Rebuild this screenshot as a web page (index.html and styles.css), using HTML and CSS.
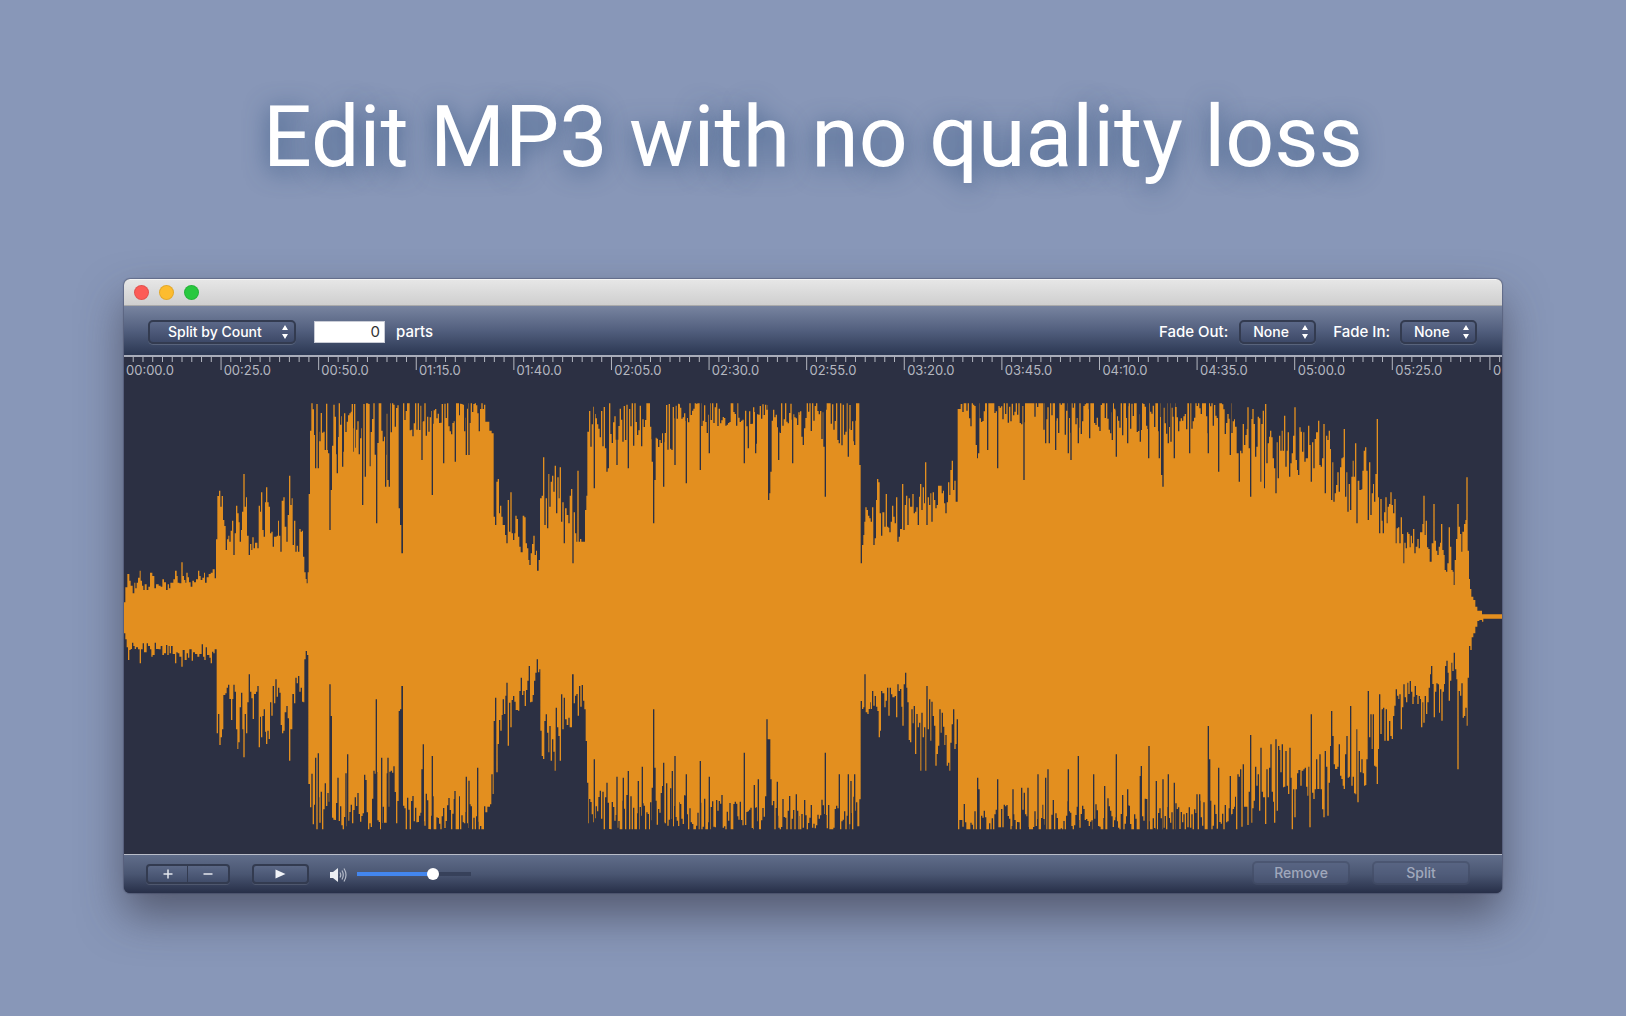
FILE: index.html
```html
<!DOCTYPE html>
<html lang="en">
<head>
  <meta charset="UTF-8">
  <meta name="viewport" content="width=device-width, initial-scale=1.0">
  <title>Edit MP3 with no quality loss</title>
  <link rel="stylesheet" href="styles.css">
</head>
<body>
  <h1>Edit MP3 with no quality loss</h1>

  <main class="window">
    <div class="titlebar">
      <button class="light close" type="button" aria-label="Close"></button>
      <button class="light minimize" type="button" aria-label="Minimize"></button>
      <button class="light zoom" type="button" aria-label="Zoom"></button>
    </div>

    <div class="toolbar">
      <div class="popup wide">
        <select id="splitMode" aria-label="Split mode">
          <option>Split by Count</option>
        </select>
        <svg class="arrows" viewBox="0 0 8 16"><path d="M4 1L7 6H1zM4 15L1 10H7z"/></svg>
      </div>
      <input type="text" id="parts" value="0">
      <label for="parts">parts</label>

      <label class="fade-out" for="fadeOut">Fade Out:</label>
      <div class="popup">
        <select id="fadeOut">
          <option>None</option>
        </select>
        <svg class="arrows" viewBox="0 0 8 16"><path d="M4 1L7 6H1zM4 15L1 10H7z"/></svg>
      </div>
      <label class="fade-in" for="fadeIn">Fade In:</label>
      <div class="popup">
        <select id="fadeIn">
          <option>None</option>
        </select>
        <svg class="arrows" viewBox="0 0 8 16"><path d="M4 1L7 6H1zM4 15L1 10H7z"/></svg>
      </div>
    </div>

    <div class="ruler">
      <svg id="ticks" class="ticks"></svg>
      <div class="times">
        <span>00:00.0</span>
        <span>00:25.0</span>
        <span>00:50.0</span>
        <span>01:15.0</span>
        <span>01:40.0</span>
        <span>02:05.0</span>
        <span>02:30.0</span>
        <span>02:55.0</span>
        <span>03:20.0</span>
        <span>03:45.0</span>
        <span>04:10.0</span>
        <span>04:35.0</span>
        <span>05:00.0</span>
        <span>05:25.0</span>
        <span>05:50.0</span>
      </div>
    </div>

    <div class="wave">
      <svg viewBox="0 0 4134 1419" preserveAspectRatio="none">
        <path id="wavePath" transform="translate(0 30)"/>
      </svg>
    </div>

    <div class="controls">
      <div class="segmented">
        <button type="button" aria-label="Zoom in">
          <svg width="10" height="10" viewBox="0 0 10 10"><path d="M5 0.5V9.5M0.5 5H9.5"/></svg>
        </button>
        <button type="button" aria-label="Zoom out">
          <svg width="10" height="10" viewBox="0 0 10 10"><path d="M0.5 5H9.5"/></svg>
        </button>
      </div>
      <button class="play" type="button" aria-label="Play">
        <svg width="11" height="10" viewBox="0 0 11 10"><path d="M0.5 0.5L10.5 5L0.5 9.5z"/></svg>
      </button>
      <svg class="speaker" width="18" height="16" viewBox="0 0 18 16">
        <path class="cone" d="M0 5H3L8 1V15L3 11H0z"/>
        <path d="M10 5.5Q11.500 8 10 10.500M12 3.500Q14.500 8 12 12.500M14 1.500Q18 8 14 14.500"/>
      </svg>
      <input type="range" id="volume" min="0" max="100" value="69" aria-label="Volume">
      <button class="action remove" type="button" disabled>Remove</button>
      <button class="action" type="button" disabled>Split</button>
    </div>
  </main>
  <script src="wave.js"></script>
</body>
</html>
```
FILE: styles.css
```css
* {
  box-sizing: border-box;
}

body {
  margin: 0;
  min-height: 100vh;
  display: flex;
  flex-direction: column;
  padding: 82px 124px 123px;
  background: #8897b8;
  font-family: Inter, "Liberation Sans", sans-serif;
  font-size: 14px;
  color: #fff;
}

h1 {
  margin: 0 0 87px;
  font-family: Roboto, Inter, sans-serif;
  font-size: 86px;
  line-height: 110px;
  font-weight: 400;
  text-align: center;
  white-space: nowrap;
  text-shadow: 0 4px 24px rgba(40, 75, 120, 0.8);
}

.window {
  flex: 1;
  display: flex;
  flex-direction: column;
  border-radius: 6px;
  overflow: hidden;
  background: #2c3043;
  box-shadow: 0 0 1px 1px rgba(50, 58, 85, 0.4), 0 22px 44px rgba(50, 50, 65, 0.6);
}

/* title bar */
.titlebar {
  display: flex;
  align-items: center;
  gap: 10px;
  height: 27px;
  padding-left: 10px;
  background: linear-gradient(#e6e6e6, #cfcfcf);
  border-top: 1px solid #f3f3f3;
  border-bottom: 1px solid #aaaaaa;
}

.light {
  width: 15px;
  height: 15px;
  padding: 0;
  border: 1px solid rgba(0, 0, 0, 0.1);
  border-radius: 50%;
}

.close {
  background: #fc5b57;
}

.minimize {
  background: #fdbc2e;
}

.zoom {
  background: #28c83f;
}

/* top toolbar */
.toolbar {
  display: flex;
  align-items: center;
  height: 51px;
  padding: 2px 25px 0 24px;
  background: linear-gradient(#7884a0, #525f7e 50%, #2b3752);
  border-bottom: 2px solid #a9adba;
  font-size: 15px;
  font-weight: 500;
}

.popup {
  display: grid;
  width: 77px;
}

.popup.wide {
  width: 148px;
}

.popup select,
.arrows {
  grid-area: 1 / 1;
}

.popup select {
  height: 24px;
  padding: 0 0 0 12px;
  appearance: none;
  border: 2px solid #333b50;
  border-radius: 5px;
  background: linear-gradient(#5b6888, #3d4968);
  box-shadow: 0 1px 0 rgba(255, 255, 255, 0.15);
  color: #fff;
  font: 500 14px Inter, "Liberation Sans", sans-serif;
}

.popup.wide select {
  padding-left: 18px;
}

.arrows {
  justify-self: end;
  align-self: center;
  width: 8px;
  height: 16px;
  margin-right: 7px;
  fill: #fff;
  pointer-events: none;
}

#parts {
  width: 71px;
  height: 22px;
  margin: 0 11px 0 18px;
  padding: 0 4px;
  border: 1px solid #c9ccd6;
  background: #fff;
  color: #333;
  font: 15px Inter, "Liberation Sans", sans-serif;
  text-align: right;
}

.fade-out {
  margin: 0 11px 0 auto;
}

.fade-in {
  margin: 0 10px 0 17px;
}

/* time ruler */
.ruler {
  display: grid;
  height: 23px;
}

.ticks,
.times {
  grid-area: 1 / 1;
  width: 100%;
  height: 23px;
}

.ticks line {
  stroke: #b4b7c0;
  stroke-width: 1;
}

.times {
  display: flex;
  padding-top: 5px;
  overflow: hidden;
  color: #b4b7c0;
  font-size: 13px;
  line-height: 16px;
}

.times span {
  flex: 0 0 7.086%;
  padding-left: 2px;
}

/* waveform */
.wave {
  flex: 1;
  display: flex;
  min-height: 200px;
}

.wave svg {
  width: 100%;
  height: 100%;
}

#wavePath {
  fill: #e38f1f;
}

/* bottom bar */
.controls {
  display: flex;
  align-items: center;
  height: 39px;
  padding: 0 32px 1px 22px;
  border-top: 1px solid #b9bdc9;
  background: linear-gradient(#606d8a, #4a5672 50%, #272f48);
}

.segmented {
  display: flex;
}

.controls button {
  display: flex;
  align-items: center;
  justify-content: center;
  width: 57px;
  height: 20px;
  padding: 0;
  border: 2px solid #333b50;
  border-radius: 4px;
  background: linear-gradient(#5b6886, #414d6a);
  box-shadow: 0 1px 0 rgba(255, 255, 255, 0.12);
}

.controls .segmented button {
  width: 42px;
}

.controls .segmented button:first-child {
  border-right-width: 1px;
  border-radius: 4px 0 0 4px;
}

.controls .segmented button:last-child {
  border-left: none;
  border-radius: 0 4px 4px 0;
}

.segmented svg {
  fill: none;
  stroke: #e4e7ee;
  stroke-width: 1.5;
}

.play {
  margin-left: 22px;
}

.play svg {
  fill: #f2f4f8;
}

.speaker {
  margin: 2px 9px 0 21px;
  fill: none;
  stroke: #b4bac8;
  stroke-width: 1.2;
}

.speaker .cone {
  fill: #eceef2;
  stroke: none;
}

#volume {
  width: 114px;
  height: 12px;
  margin: 0;
  appearance: none;
  border-radius: 2px;
  background: linear-gradient(90deg, #4386ee 68%, #37415a 68%) center / 100% 4px no-repeat;
}

#volume::-webkit-slider-thumb {
  appearance: none;
  width: 12px;
  height: 12px;
  border-radius: 50%;
  background: #fff;
}

.controls .action {
  width: 98px;
  height: 24px;
  margin: 0 0 2px 22px;
  border: 2px solid rgba(51, 59, 80, 0.35);
  border-radius: 5px;
  background: rgba(90, 102, 134, 0.4);
  box-shadow: none;
  color: #a0a8bc;
  font: 500 14px Inter, "Liberation Sans", sans-serif;
}

.controls .remove {
  margin-left: auto;
}
```
FILE: wave.js
```js
// ruler: one tick every 2.5 seconds, a long one every 25
var ticks = document.getElementById('ticks');
for (var i = 1; i <= 141; i++) {
  var line = document.createElementNS('http://www.w3.org/2000/svg', 'line');
  line.setAttribute('x1', (i * 0.7083 - 0.04) + '%');
  line.setAttribute('x2', (i * 0.7083 - 0.04) + '%');
  line.setAttribute('y1', 0);
  line.setAttribute('y2', i % 10 ? 5 : 13);
  ticks.appendChild(line);
}

// peaks of the track, "x level" pairs; start is where the part begins
var parts = [
  {
    start: -12,
    top: '12 637,16 592,22 552,28 572,32 587,38 610,43 578,46 595,50 578,54 563,59 542,62 572,66 587,70 600,74 583,80 600,85 590,90 548,97 558,103 595,108 583,116 587,122 590,127 568,132 577,138 600,143 583,147 595,151 578,160 568,165 542,170 558,173 578,178 580,184 517,188 558,192 570,196 578,199 548,203 562,207 577,212 590,217 572,222 577,228 568,234 542,238 558,242 570,247 563,252 548,255 578,260 562,266 552,272 548,278 538,284 565,288 448,292 318,297 302,301 350,305 318,309 390,313 408,317 480,321 448,325 437,328 455,332 422,336 392,340 495,344 430,348 347,352 370,356 397,359 455,363 420,366 365,370 252,374 350,378 322,381 437,386 495,390 462,394 480,397 442,401 475,405 458,412 475,416 347,420 365,423 307,427 420,431 440,435 337,438 292,442 337,446 350,450 430,454 425,458 470,462 440,470 437,474 392,477 437,481 485,485 332,490 322,494 410,499 455,503 375,507 257,511 345,515 325,518 465,522 392,526 485,530 467,534 485,538 417,542 425,546 422,549 500,553 547,557 567,560 580,563 547,566 312,570 122,574 112',
    bottom: '12 730,16 748,20 772,24 810,28 780,32 777,36 758,40 768,44 777,48 772,54 778,59 820,63 778,68 760,72 787,80 760,84 768,90 778,94 800,98 795,104 758,108 777,116 778,122 768,127 795,132 790,138 765,142 795,146 768,149 790,153 768,158 792,165 820,169 787,173 790,178 800,184 830,188 780,194 810,200 790,204 803,208 778,215 812,219 787,225 792,232 800,238 792,245 763,249 800,253 810,257 772,261 795,268 803,272 820,276 785,280 790,284 778,290 1030,294 972,298 1065,302 1042,306 1018,310 915,316 910,320 893,324 884,328 927,333 990,337 927,340 884,344 905,348 1018,352 1077,355 1057,359 952,363 908,367 1018,370 1102,374 972,378 1030,382 937,386 853,390 905,394 925,398 987,402 912,408 905,412 888,416 1072,420 980,423 1042,427 978,431 958,435 1025,438 1062,442 1022,446 1047,450 937,454 977,458 888,462 940,466 868,470 920,474 893,478 908,482 1005,486 1030,490 1022,494 967,499 948,503 985,507 1112,511 1018,517 912,522 940,526 863,530 880,534 858,538 905,542 893,546 935,550 937,553 808,557 783,561 795,565 1182,570 1252,574 1290',
    loud: [[574, 628, 35, 200, 1325, 1130], [628, 720, 35, 210, 1325, 1130], [720, 835, 30, 230, 1325, 1120], [849, 1020, 25, 140, 1330, 1210]],
    topDips: '586 235,590 42,594 235,625 190,629 420,633 300,651 250,667 230,696 42,703 42,727 345,731 42,735 260,746 42,769 400,796 290,803 270,807 290,837 355,841 405,845 490,905 210,936 315,970 220,1005 215',
    bottomDips: '586 1103,590 1318,594 1090,629 883,633 978,682 1093,768 928,784 1103,803 1103,837 963,841 958,845 888,905 1138,909 1063,936 1098,1004 1203'
  },
  {
    start: 1008,
    top: '80 95,88 122,95 130,101 380,105 405,109 275,113 267,117 370,120 347,124 380,128 405,135 435,139 460,143 330,147 425,151 307,155 430,159 450,163 430,166 377,170 387,174 440,178 470,182 487,188 377,193 382,197 460,201 475,205 510,208 525,212 490,216 462,220 437,224 495,228 482,231 542,236 510,240 325,245 317,249 202,253 405,257 325,261 415,265 252,268 350,272 275,276 257,280 305,284 227,288 370,292 262,296 325,299 232,303 395,307 337,311 460,315 355,320 375,325 400,329 317,333 297,337 520,341 367,345 430,349 455,352 242,356 455,360 447,364 455,375 360,379 317,382 125,387 67',
    bottom: '82 1250,90 1243,94 1153,98 1212,101 993,105 923,109 1147,113 1062,117 990,121 1022,125 975,128 928,132 972,136 917,139 878,143 1067,147 938,151 1012,155 930,159 918,163 935,167 960,174 962,178 903,182 863,186 915,190 903,194 948,198 900,202 872,206 828,210 937,214 935,218 915,222 872,226 848,230 808,234 847,238 838,241 1022,245 1098,249 1107,253 993,257 973,261 1028,265 1087,268 1008,272 1112,276 1048,280 1085,284 1142,287 953,291 1012,295 1038,299 1112,303 913,307 1018,311 923,315 988,320 1005,325 983,329 1012,336 853,341 940,345 917,349 912,353 977,357 888,361 950,365 885,369 932,373 958,377 1053,381 1178,385 1300',
    loud: [[0, 80, 35, 125, 1325, 1240], [387, 570, 20, 180, 1335, 1200], [570, 660, 40, 190, 1310, 1170], [660, 835, 20, 130, 1335, 1210], [835, 935, 40, 190, 1325, 1190], [935, 1020, 25, 130, 1335, 1210]],
    topDips: '18 195,26 195,402 295,436 175,440 245,444 235,470 225,504 235,576 215,580 400,584 270,610 290,644 225,678 280,720 240,747 190,852 220,886 190,925 330,929 310,932 245,955 210,997 220',
    bottomDips: '18 1160,26 1172,52 1133,402 1108,440 1178,470 1160,489 1163,504 1143,534 1173,546 1130,576 1193,580 958,584 1133,610 1118,636 1143,644 1098,678 1153,720 1113,747 1160,852 1088,882 1185,894 1168,920 988,924 1048,928 1048,932 1168,951 1175'
  },
  {
    start: 2028,
    top: '178 225,182 520,186 465,190 435,193 395,196 352,200 360,204 377,208 385,212 395,216 352,220 465,224 445,228 330,231 267,235 277,239 370,243 437,247 367,253 410,257 312,261 410,265 413,268 427,272 395,276 347,280 380,284 400,288 322,292 455,296 440,300 417,306 282,310 420,314 345,318 317,322 405,326 325,330 350,337 312,341 370,345 365,349 352,353 405,357 320,360 282,364 360,368 292,372 340,375 217,379 405,383 322,387 345,391 310,394 395,398 307,402 330,406 355,410 345,414 287,421 287,425 310,429 302,432 340,436 370,440 337,444 277,448 315,451 240,455 212,459 300,463 272,467 335,473 57,482 42,487 135',
    bottom: '178 1228,182 933,186 957,190 952,193 853,197 967,202 972,206 957,210 937,212 957,216 903,220 947,224 918,228 950,232 963,236 1042,240 1022,243 903,247 910,253 952,257 932,261 893,265 977,269 893,273 913,277 922,284 918,288 982,292 883,296 903,300 897,304 950,307 1007,311 883,315 848,319 893,322 937,326 1050,330 1057,334 958,338 1000,341 948,345 1092,349 972,353 1012,357 998,361 1142,364 968,368 1042,372 1012,376 1142,379 888,383 1018,387 928,391 1052,394 935,398 978,402 1007,406 1127,410 1092,414 1067,418 958,422 1028,425 968,429 1010,433 1065,436 1035,440 1127,444 1118,448 1142,451 1058,455 1003,459 958,463 1077,467 1062,470 988,474 1318,478 1290',
    loud: [[0, 176, 25, 170, 1335, 1220], [487, 730, 10, 110, 1340, 1240], [730, 1050, 20, 140, 1340, 1220]],
    topDips: '71 170,75 320,117 160,144 200,163 165,528 165,532 205,535 190,562 180,592 235,671 270,736 160,747 160,766 180,804 190,812 210,834 160,868 145,936 150,948 200,982 160,1020 155,1045 205',
    bottomDips: '75 1088,117 1153,144 1153,152 1173,163 1153,532 1163,536 1198,592 1168,638 1198,664 1193,672 1208,683 1193,713 1153,736 1163,743 1138,804 1138,834 1098,880 1153,913 1188,948 1093,967 1215,982 1198,1020 1158,1023 1128,1046 1068'
  },
  {
    start: 3078,
    top: '255 110,260 190,266 275,270 182,274 190,278 102,282 165,286 135,290 117,292 52,296 175,300 320,304 87,307 57,311 102,315 200,319 170,323 80,327 85,331 275,334 102,338 62,342 295,345 42,349 220,353 160,357 140,360 122,364 142,368 205,372 235,376 310,380 157,383 265,387 137,391 182,395 122,398 182,402 77,406 230,410 182,413 127,417 260,421 220,425 190,429 137,433 52,437 210,441 240,444 255,448 112,452 125,456 185,460 127,463 215,467 205,474 107,478 165,482 275,486 157,490 235,494 147,498 127,504 92,508 225,512 230,516 205,520 102,524 310,528 137,532 150,536 122,540 177,543 330,547 217,550 335,554 310,558 285,562 247,566 305,570 232,574 205,578 202,581 117,585 320,589 247,592 365,596 282,600 360,604 260,608 212,611 260,615 160,619 400,623 272,628 300,634 298,637 242,641 182,645 172,649 242,653 390,657 217,661 375,665 310,669 282,672 335,676 252,680 87,684 322,687 430,691 327,695 392,698 430,702 367,706 322,710 400,713 350,717 342,721 307,725 345,729 370,733 327,737 460,740 415,744 412,748 460,752 382,756 432,760 520,763 458,767 475,771 427,775 432,779 472,782 437,786 460,789 417,793 490,797 470,802 447,806 475,810 427,817 402,820 317,824 435,827 392,831 472,835 477,839 515,845 460,850 342,854 452,858 482,862 495,866 470,870 458,873 402,877 480,881 495,884 540,888 545,892 520,896 412,900 470,904 540,908 545,911 585,914 510,918 447,922 342,926 410,930 432,934 485,937 425,942 402,946 390,949 262,953 482,957 567,960 597,964 620,970 630,976 650,982 662,990 662,996 673',
    bottom: '250 1200,254 1220,258 1318,262 1153,266 1160,270 1138,274 1310,278 1123,282 1250,292 1305,296 1205,300 1035,304 1298,307 1255,311 1232,315 1130,319 1187,323 1153,327 1262,331 1073,335 1205,339 1222,345 1302,349 1138,353 1222,357 1133,361 1063,365 1205,369 1235,372 1298,376 1048,380 1262,384 1068,388 1080,391 1147,395 1063,399 1192,402 1190,406 1083,410 1187,414 1212,418 1073,422 1163,425 1318,429 1198,433 1282,437 1198,441 1150,445 1140,451 1187,455 1142,460 1138,464 1133,468 1190,472 1217,475 1130,478 1312,482 973,486 1208,490 1227,494 1198,498 1108,502 1197,508 1093,512 1198,516 1258,520 1282,524 1083,528 1130,532 1277,536 1178,540 1068,543 963,547 1038,551 1123,555 1137,562 1130,566 1063,570 1157,574 1167,578 1187,581 1197,585 1093,589 1038,593 1163,597 1160,600 948,604 1187,608 1160,612 1210,616 1213,619 1018,622 1237,626 1083,630 1147,634 1108,638 1150,642 1187,646 1185,649 1108,653 903,657 1042,661 973,665 1077,668 973,672 1127,676 1130,680 1182,684 1077,687 913,691 1032,695 958,699 953,703 1052,707 958,711 1052,717 993,721 1038,725 1047,729 978,733 947,737 898,741 917,745 927,748 913,752 1018,756 952,760 883,764 922,768 937,772 878,775 912,779 873,783 905,787 942,791 920,794 888,798 915,802 942,806 918,810 927,813 1012,817 937,820 998,824 918,828 972,832 937,836 893,840 853,843 828,847 882,851 982,855 905,859 880,863 883,867 968,870 898,874 992,878 905,882 882,885 828,889 812,893 848,896 932,900 872,904 818,907 843,911 788,915 838,919 868,922 1138,926 903,930 917,934 880,938 983,942 978,946 953,950 1007,953 863,957 768,961 780,965 742,970 730,976 710,982 693,988 690,996 695,1000 686',
    loud: [[0, 255, 20, 140, 1340, 1230]],
    topDips: '27 205,34 255,38 290,54 160,62 155,72 205,118 190,174 190,205 245,240 195',
    bottomDips: '18 1173,38 1168,54 1153,72 1178,140 1213,148 1213,174 1008,178 1108,205 1133,240 1158'
  }
];

var WIDTH = 4134;
var CLIP_TOP = 40;
var CLIP_BOTTOM = 1318;
var upper = [];
var lower = [];

// small repeatable generator for the dense clipped stretches
var seed = 7;
function random() {
  seed = (seed * 16807) % 2147483647;
  return seed / 2147483647;
}

function pairs(text) {
  return text.split(',').map(function (p) {
    return p.split(' ').map(Number);
  });
}

function put(levels, from, to, value) {
  value = Math.round(Math.min(CLIP_BOTTOM, Math.max(CLIP_TOP, value)));
  for (var x = from; x < to && x < WIDTH; x++) {
    levels[x] = value;
  }
}

function steps(levels, start, text) {
  var list = pairs(text);
  list.forEach(function (p, n) {
    var end = n + 1 < list.length ? start + list[n + 1][0] : (start > 3000 ? WIDTH : start + p[0] + 4);
    put(levels, start + p[0], end, p[1]);
  });
}

parts.forEach(function (part) {
  steps(upper, part.start, part.top);
  steps(lower, part.start, part.bottom);
  part.loud.forEach(function (b) {
    for (var x = b[0]; x < b[1]; x += 4) {
      var from = part.start + x;
      var to = part.start + Math.min(x + 4, b[1]);
      put(upper, from, to, b[2] + (b[3] - b[2]) * Math.pow(random(), 1.6));
      put(lower, from, to, b[4] + (b[5] - b[4]) * Math.pow(random(), 1.4));
    }
  });
  pairs(part.topDips).forEach(function (p) {
    put(upper, part.start + p[0] - 1, part.start + p[0] + 3, p[1]);
  });
  pairs(part.bottomDips).forEach(function (p) {
    put(lower, part.start + p[0] - 1, part.start + p[0] + 3, p[1]);
  });
});

// fill any column nobody set with its neighbour
for (var c = 1; c < WIDTH; c++) {
  if (upper[c] === undefined) upper[c] = upper[c - 1];
  if (lower[c] === undefined) lower[c] = lower[c - 1];
}

var d = 'M0 ' + upper[0];
for (var a = 1; a < WIDTH; a++) {
  if (upper[a] !== upper[a - 1]) d += 'H' + a + 'V' + upper[a];
}
d += 'H' + WIDTH + 'V' + lower[WIDTH - 1];
for (var b = WIDTH - 1; b > 0; b--) {
  if (lower[b] !== lower[b - 1]) d += 'H' + b + 'V' + lower[b - 1];
}
document.getElementById('wavePath').setAttribute('d', d + 'H0Z');
```
